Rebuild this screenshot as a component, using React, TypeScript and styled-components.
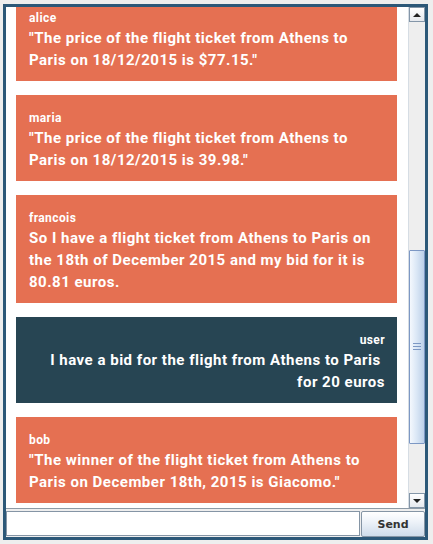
import React, { useLayoutEffect, useRef } from "react";
import styled, { createGlobalStyle } from "styled-components";

const GlobalStyle = createGlobalStyle`
  html, body { margin: 0; padding: 0; background: #eeeeee; }
  body { font-family: Roboto, "Noto Sans", sans-serif; }
`;

type Msg = { id: number; name: string; text: string; own?: boolean };

const messages: Msg[] = [
  { id: 6, name: "alice", text: "\"The price of the flight ticket from Athens to Paris on 18/12/2015 is $77.15.\"" },
  { id: 7, name: "maria", text: "\"The price of the flight ticket from Athens to Paris on 18/12/2015 is 39.98.\"" },
  { id: 8, name: "francois", text: "So I have a flight ticket from Athens to Paris on the 18th of December 2015 and my bid for it is 80.81 euros." },
  { id: 9, name: "user", text: "I have a bid for the flight from Athens to Paris\u00a0 for 20 euros", own: true },
  { id: 10, name: "bob", text: "\"The winner of the flight ticket from Athens to Paris on December 18th, 2015 is Giacomo.\"" },
];

const ANCHOR_ID = 6;

const Frame = styled.div`
  margin: 4px 5px 4px 3px;
  border: 3px solid #2c5878;
  height: 530px;
  display: flex;
  flex-direction: column;
  background: #eeeeee;
`;

const ScrollPane = styled.div`
  height: 501px;
  display: flex;
  border-bottom: 1px solid #8d9aa6;
  background: #ffffff;
`;

const Viewport = styled.div`
  flex: 1;
  overflow: hidden;
  position: relative;
  background: #ffffff;
`;

const List = styled.div`
  display: flex;
  flex-direction: column;
  gap: 14px;
  padding: 10px 11px 10px 10px;
`;

const Bubble = styled.div<{ $own?: boolean }>`
  background: ${(p) => (p.$own ? "#274553" : "#e57052")};
  color: #ffffff;
  padding: 15px 12px 10px 13px;
  text-align: ${(p) => (p.$own ? "right" : "left")};
`;

const Name = styled.div`
  font-family: Roboto, sans-serif;
  font-weight: 700;
  font-size: 12px;
  line-height: 17px;
  letter-spacing: 0.4px;
`;

const Text = styled.div`
  font-family: Roboto, sans-serif;
  font-weight: 700;
  font-size: 15px;
  line-height: 22px;
  letter-spacing: 0.5px;
`;

const ScrollBar = styled.div`
  width: 16px;
  display: flex;
  flex-direction: column;
  background: #eeeeee;
  border-left: 1px solid #d6dde4;
`;

const ArrowButton = styled.div`
  height: 15px;
  box-sizing: border-box;
  border: 1px solid #8496a8;
  background: linear-gradient(#ffffff, #e6e9ee);
  display: flex;
  align-items: center;
  justify-content: center;
`;

const Arrow = styled.div<{ $down?: boolean }>`
  width: 0;
  height: 0;
  border-left: 4px solid transparent;
  border-right: 4px solid transparent;
  ${(p) => (p.$down ? "border-top: 4px solid #222;" : "border-bottom: 4px solid #222;")}
`;

const Track = styled.div`
  flex: 1;
  display: flex;
  flex-direction: column;
  background: #eeeeee;
`;

const TrackSpace = styled.div<{ $grow: number }>`
  flex: ${(p) => p.$grow};
`;

const Thumb = styled.div`
  flex: 195;
  box-sizing: border-box;
  border: 1px solid #7d98c4;
  border-radius: 1px;
  background: linear-gradient(90deg, #f4f8fd 0%, #dce8f6 45%, #bcd0e8 100%);
  display: flex;
  align-items: center;
  justify-content: center;
`;

const Grip = styled.div`
  width: 8px;
  height: 5px;
  border-top: 1px solid #7d98c4;
  border-bottom: 1px solid #7d98c4;
  position: relative;
  &::after {
    content: "";
    position: absolute;
    left: 0;
    right: 0;
    top: 2px;
    border-top: 1px solid #7d98c4;
  }
`;

const InputRow = styled.div`
  display: flex;
  height: 25px;
  margin-top: 2px;
  gap: 1px;
`;

const Field = styled.input`
  flex: 1;
  min-width: 0;
  box-sizing: border-box;
  height: 25px;
  margin: 0;
  border: 1px solid #8595a5;
  background: #ffffff;
  outline: none;
  font-family: "DejaVu Sans", sans-serif;
  font-size: 12px;
`;

const SendButton = styled.button`
  width: 64px;
  height: 26px;
  box-sizing: border-box;
  margin: 0;
  border: 1px solid #8595a5;
  border-radius: 2px;
  background: linear-gradient(#ffffff 0%, #eef3f9 40%, #cfdcea 100%);
  color: #333333;
  font-family: "DejaVu Sans", sans-serif;
  font-weight: 700;
  font-size: 11px;
  padding: 0;
`;

export default function App() {
  const viewRef = useRef<HTMLDivElement>(null);
  const anchorRef = useRef<HTMLDivElement>(null);

  useLayoutEffect(() => {
    if (viewRef.current && anchorRef.current) {
      viewRef.current.scrollTop = anchorRef.current.offsetTop + 12;
    }
  }, []);

  return (
    <>
      <GlobalStyle />
      <Frame>
        <ScrollPane>
          <Viewport ref={viewRef}>
            <List>
              {messages.map((m) => (
                <Bubble key={m.id} $own={m.own} ref={m.id === ANCHOR_ID ? anchorRef : undefined}>
                  <Name>{m.name}</Name>
                  <Text>{m.text}</Text>
                </Bubble>
              ))}
            </List>
          </Viewport>
          <ScrollBar>
            <ArrowButton>
              <Arrow />
            </ArrowButton>
            <Track>
              <TrackSpace $grow={232} />
              <Thumb>
                <Grip />
              </Thumb>
              <TrackSpace $grow={50} />
            </Track>
            <ArrowButton>
              <Arrow $down />
            </ArrowButton>
          </ScrollBar>
        </ScrollPane>
        <InputRow>
          <Field type="text" />
          <SendButton>Send</SendButton>
        </InputRow>
      </Frame>
    </>
  );
}
